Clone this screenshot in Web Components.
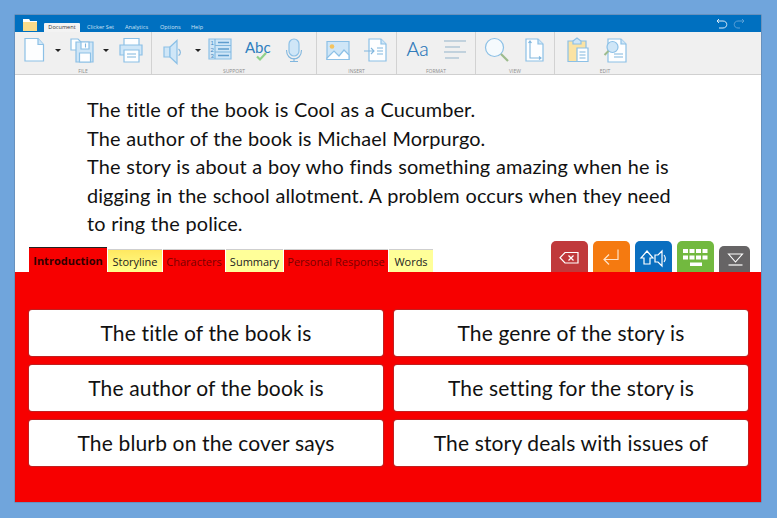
<!DOCTYPE html>
<html lang="en">
<head>
<meta charset="utf-8">
<title>Clicker document</title>
<style>
  html, body { margin: 0; height: 100%; background: #70a5dc; overflow: hidden; }
  body { font-family: "Lato", "Open Sans", sans-serif; }
</style>
</head>
<body>
<app-window>
  <title-bar slot="title"></title-bar>
  <rb-ribbon slot="ribbon">
    <rb-group label="FILE" width="137" pad="8">
      <rb-icon name="new"></rb-icon><rb-caret style="margin-left:8px"></rb-caret>
      <rb-icon name="save" style="margin-left:9px"></rb-icon><rb-caret style="margin-left:9px"></rb-caret>
      <rb-icon name="print" style="margin-left:10px"></rb-icon>
    </rb-group>
    <rb-group label="SUPPORT" width="165" pad="11">
      <rb-icon name="speaker"></rb-icon><rb-caret style="margin-left:8px"></rb-caret>
      <rb-icon name="list" style="margin-left:7px"></rb-icon>
      <rb-icon name="abc" style="margin-left:12px"></rb-icon>
      <rb-icon name="mic" style="margin-left:18px"></rb-icon>
    </rb-group>
    <rb-group label="INSERT" width="80" pad="9">
      <rb-icon name="image"></rb-icon><rb-icon name="import" style="margin-left:14px"></rb-icon>
    </rb-group>
    <rb-group label="FORMAT" width="79" pad="8">
      <rb-icon name="font"></rb-icon><rb-icon name="lines" style="margin-left:15px"></rb-icon>
    </rb-group>
    <rb-group label="VIEW" width="79" pad="10">
      <rb-icon name="zoom"></rb-icon><rb-icon name="page" style="margin-left:15px"></rb-icon>
    </rb-group>
    <rb-group label="EDIT" width="100" pad="12" last>
      <rb-icon name="paste"></rb-icon><rb-icon name="find" style="margin-left:12px"></rb-icon>
    </rb-group>
  </rb-ribbon>
  <doc-text slot="doc">
    <p>The title of the book is Cool as a Cucumber.</p>
    <p>The author of the book is Michael Morpurgo.</p>
    <p>The story is about a boy who finds something amazing when he is digging in the school allotment. A problem occurs when they need to ring the police.</p>
  </doc-text>
  <tab-row slot="tabs">
    <set-tab kind="active">Introduction</set-tab>
    <set-tab kind="gold" w="54">Storyline</set-tab>
    <set-tab kind="red" w="62">Characters</set-tab>
    <set-tab kind="yellow" w="57">Summary</set-tab>
    <set-tab kind="red" w="104">Personal Response</set-tab>
    <set-tab kind="yellow" w="44">Words</set-tab>
    <key-btn slot="keys" color="#c0393b" icon="back"></key-btn>
    <key-btn slot="keys" color="#f57a10" icon="enter"></key-btn>
    <key-btn slot="keys" color="#0a6fc0" icon="shift"></key-btn>
    <key-btn slot="keys" color="#72b93f" icon="keyboard"></key-btn>
    <key-btn slot="keys" color="#666465" icon="hide" small></key-btn>
  </tab-row>
  <phrase-grid slot="panel">
    <phrase-btn>The title of the book is</phrase-btn>
    <phrase-btn>The genre of the story is</phrase-btn>
    <phrase-btn>The author of the book is</phrase-btn>
    <phrase-btn>The setting for the story is</phrase-btn>
    <phrase-btn>The blurb on the cover says</phrase-btn>
    <phrase-btn>The story deals with issues of</phrase-btn>
  </phrase-grid>
</app-window>

<script>
// tiny helper so every element below reads the same
function shadow(el, html) {
  el.attachShadow({ mode: 'open' }).innerHTML = html;
}

const S = 'fill="#fdfeff" stroke="#8cc0e6" stroke-width="1.2"';
const L = 'fill="#cfe6f7" stroke="#8cc0e6" stroke-width="1.2"';
const D = 'fill="none" stroke="#80b6de" stroke-width="1.1"';

const ICONS = {
  new: `<path d="M2 .5h13l5.500 6V23H2z" ${S}/><path d="M15 .5v6h5.500" ${L}/>`,
  save: `<path d="M1 1h7l3 3v8H1z" ${S}/><path d="M6 4h17v20H6z" ${L}/><path d="M11 4h8v7h-8z" ${S}/><path d="M15.500 5.500v4" ${D}/><path d="M9.500 15h11v9h-11z" ${S}/>`,
  print: `<path d="M5 .5h15v7H5z" ${S}/><path d="M1 7h22v10H1z" ${L}/><path d="M5 12h15v12H5z" ${S}/><path d="M8 16h9M8 19h9" ${D}/>`,
  speaker: `<path d="M1 9h6v10H1z" ${L}/><path d="M7 9l7-6.500v23L7 19z" ${L}/><path d="M15.500 11c2.500 2 2.500 5 0 6.500" ${D}/>`,
  list: `<path d="M1 1h22v20H1z" ${L}/><path d="M7 1v20M7 7.500h16M7 14h16" ${D}/><path d="M10 4.500h11M10 11h11M10 17.500h11" stroke="#5f9dcd" stroke-width="1.300"/><text x="2.500" y="7" font-size="6" font-family="Liberation Sans" fill="#3f86bf">1</text><text x="2.500" y="13.500" font-size="6" font-family="Liberation Sans" fill="#3f86bf">2</text><text x="2.500" y="20" font-size="6" font-family="Liberation Sans" fill="#3f86bf">3</text>`,
  abc: `<text x="1" y="14.500" font-size="15" font-family="Lato" fill="#2f7fbf">Abc</text><path d="M13 18.500l3 3 6-6.500" fill="none" stroke="#8fd08a" stroke-width="2.200"/>`,
  mic: `<rect x="3" y="1" width="10" height="17" rx="5" ${L}/><path d="M.5 12c0 12 15 12 15 0M8 20v3.500M4 23.500h8" ${D}/>`,
  image: `<path d="M1 3.500h22v18H1z" ${L}/><circle cx="6" cy="8.500" r="2.300" fill="#f4c35e"/><path d="M1 20l7-7 5 5 5-6 5 5v4.500H1z" ${S}/>`,
  import: `<path d="M5 1h12l5 5v17H5z" ${S}/><path d="M17 1v5h5" ${L}/><path d="M0 13h10M7 10l3 3-3 3" ${D}/><path d="M13 10h6M13 13h6M13 16h6" ${D}/>`,
  font: `<text x="1.500" y="18" font-size="19.500" font-weight="300" font-family="Lato" fill="#1f74b8" stroke="#1f74b8" stroke-width=".15">Aa</text>`,
  lines: `<path d="M0 3h22M1 9h15M0 14h22M1 20h14" fill="none" stroke="#93b3ca" stroke-width="1"/>`,
  zoom: `<circle cx="8.500" cy="9.500" r="9" fill="#f5fafd" stroke="#8cc0e6" stroke-width="1.200"/><path d="M15 16l7 7" stroke="#9dbb8d" stroke-width="2.200"/>`,
  page: `<path d="M1 1h12l5 5v17H1z" ${S}/><path d="M13 1v5h5" ${L}/><path d="M5 3v17h11M3.500 5L5 3l1.500 2M14 18.500l2 1.500-2 1.500" ${D}/>`,
  paste: `<path d="M1 3h18v20.500H1z" fill="#fbe3a4" stroke="#8cc0e6" stroke-width="1.200"/><path d="M6 3l4-3 4 3v3H6z" ${L}/><path d="M10 10h11v13.500H10z" ${S}/><path d="M12.500 14h6M12.500 17h6M12.500 20h6" ${D}/>`,
  find: `<path d="M5 1h13l5 5v18H5z" ${S}/><path d="M18 1v5h5" ${L}/><path d="M11 16h9M11 19h9" ${D}/><circle cx="9.500" cy="9" r="5.500" ${L}/><path d="M5.500 13l-4 4" stroke="#9dbb8d" stroke-width="2"/>`
};

const KEY_ICONS = {
  back: `<path d="M9 4.500h13v10.500H9l-5-5.250z" fill="none" stroke="#fff" stroke-width="1.200"/><path d="M12.500 7.500l5 5M17.500 7.500l-5 5" stroke="#fff" stroke-width="1.200"/>`,
  enter: `<path d="M20 1.500v10H6M11 6.500l-5 5 5 5" fill="none" stroke="#ffe3c8" stroke-width="1.200"/>`,
  shift: `<path d="M7 3l6 7h-3v6H4v-6H1z" fill="none" stroke="#fff" stroke-width="1.200"/><path d="M15 7h3l4-4v15l-4-4h-3z" fill="none" stroke="#fff" stroke-width="1.200"/><path d="M24 7c1.500 2 1.500 5 0 7" fill="none" stroke="#fff" stroke-width="1.100"/>`,
  keyboard: `<g fill="#fff"><rect x="1" y="1" width="5" height="4"/><rect x="7.500" y="1" width="5" height="4"/><rect x="14" y="1" width="5" height="4"/><rect x="20.500" y="1" width="5" height="4"/><rect x="1" y="7.500" width="5" height="4"/><rect x="7.500" y="7.500" width="5" height="4"/><rect x="14" y="7.500" width="5" height="4"/><rect x="20.500" y="7.500" width="5" height="4"/><rect x="8" y="14.500" width="12" height="3.500"/></g>`,
  hide: `<path d="M4.500 3h14l-7 8z" fill="none" stroke="#fff" stroke-width="1.100"/><path d="M4.500 14h14" stroke="#fff" stroke-width="1.200"/>`
};

class AppWindow extends HTMLElement {
  connectedCallback() {
    shadow(this, `
      <style>
        :host { display: flex; flex-direction: column; box-sizing: border-box; width: 746px; height: 487px; margin: 15px; background: #fff; box-shadow: 0 0 0 .5px #5f7f9f; }
        .doc { flex: 1; min-height: 0; }
        .panel { height: 230px; background: #f70000; box-sizing: border-box; padding: 38px 13px 0 14px; }
      </style>
      <slot name="title"></slot>
      <slot name="ribbon"></slot>
      <div class="doc"><slot name="doc"></slot></div>
      <slot name="tabs"></slot>
      <div class="panel"><slot name="panel"></slot></div>
    `);
  }
}

class TitleBar extends HTMLElement {
  connectedCallback() {
    shadow(this, `
      <style>
        :host { display: flex; align-items: flex-end; height: 17px; background: #0070c0; font: 5.600px "Open Sans", sans-serif; color: #cfe3f5; }
        .folder { width: 14px; height: 13px; margin: 0 7px 1px 8px; align-self: flex-end; }
        .tab { padding: 0 0 1px; }
        .on { background: #f3f3f3; color: #333; width: 36px; height: 9px; box-sizing: border-box; text-align: center; border-radius: 1px 1px 0 0; margin-right: 7px; line-height: 9px; padding: 0; }
        .undo { margin-left: auto; margin-right: 16px; align-self: center; display: flex; gap: 5px; }
      </style>
      <svg class="folder" viewBox="0 0 14 13"><path d="M0 1h6l1 2h7v10H0z" fill="#fbdc8a"/><path d="M0 1h6l1 2h7v1H0z" fill="#fff"/></svg>
      <span class="tab on">Document</span>
      <span class="tab" style="width:38px">Clicker Set</span>
      <span class="tab" style="width:35px">Analytics</span>
      <span class="tab" style="width:31px">Options</span>
      <span class="tab">Help</span>
      <div class="undo">
        <svg width="12" height="11" viewBox="0 0 12 11"><path d="M3 1L1 3l2 2M1 3h6c5 0 5 7 0 7H3" fill="none" stroke="#dcebf7" stroke-width="1"/></svg>
        <svg width="12" height="11" viewBox="0 0 12 11"><path d="M9 1l2 2-2 2M11 3H5c-5 0-5 7 0 7h2" fill="none" stroke="#5b9fd6" stroke-width="1"/></svg>
      </div>
    `);
  }
}

class RbRibbon extends HTMLElement {
  connectedCallback() {
    shadow(this, `
      <style>
        :host { display: flex; height: 43px; background: #f0f0f0; border-bottom: 1px solid #d0d0d0; box-sizing: border-box; }
      </style>
      <slot></slot>
    `);
  }
}

class RbGroup extends HTMLElement {
  connectedCallback() {
    const w = this.getAttribute('width');
    const pad = this.getAttribute('pad');
    const line = this.hasAttribute('last') ? 'none' : '1px solid #d2d2d2';
    shadow(this, `
      <style>
        :host { display: flex; flex-direction: column; box-sizing: border-box; width: ${w}px; height: 42px; border-right: ${line}; padding: 6px 0 0 ${pad}px; }
        .items { display: flex; align-items: center; height: 24px; }
        .label { margin: 7px 0 0 -${pad}px; text-align: center; font: 5px "Open Sans", sans-serif; color: #8d8d8d; line-height: 5px; }
      </style>
      <div class="items"><slot></slot></div>
      <div class="label">${this.getAttribute('label')}</div>
    `);
  }
}

class RbIcon extends HTMLElement {
  connectedCallback() {
    shadow(this, `
      <style>:host { display: block; width: 24px; height: 24px; flex: none; } svg { display: block; overflow: visible; }</style>
      <svg width="24" height="24" viewBox="0 0 24 24">${ICONS[this.getAttribute('name')]}</svg>
    `);
  }
}

class RbCaret extends HTMLElement {
  connectedCallback() {
    shadow(this, `
      <style>:host { display: block; flex: none; width: 0; height: 0; border: 3px solid transparent; border-top: 3px solid #222; border-bottom: 0; }</style>
    `);
  }
}

class DocText extends HTMLElement {
  connectedCallback() {
    shadow(this, `
      <style>
        :host { display: block; box-sizing: border-box; padding: 20px 80px 0 72px; font: 19.900px/28.500px "Lato", "Open Sans", sans-serif; letter-spacing: .1px; word-spacing: .5px; color: #111; }
        ::slotted(p) { margin: 0; }
      </style>
      <slot></slot>
    `);
  }
}

class TabRow extends HTMLElement {
  connectedCallback() {
    shadow(this, `
      <style>
        :host { display: flex; align-items: flex-end; height: 31px; background: #fff; padding: 0 11px 0 14px; }
        .tabs { display: flex; gap: 1px; align-items: flex-end; }
        .keys { margin-left: auto; display: flex; gap: 5px; align-items: flex-end; }
      </style>
      <div class="tabs"><slot></slot></div>
      <div class="keys"><slot name="keys"></slot></div>
    `);
  }
}

class SetTab extends HTMLElement {
  connectedCallback() {
    const w = this.getAttribute('w') || 78;
    shadow(this, `
      <style>
        :host { display: block; box-sizing: border-box; width: ${w}px; height: 23px; border-top: 1px solid #cfcfcf; text-align: center; font: 11px/24px "Open Sans", sans-serif; white-space: nowrap; }
        :host([kind=yellow]) { background: #ffff99; color: #222; }
        :host([kind=gold]) { background: linear-gradient(#ffe860, #ffff8c); color: #222; }
        :host([kind=red]) { background: #f70000; color: #7a0000; }
        :host([kind=active]) { background: #f70000; color: #300000; height: 25px; border-top: 1px solid #222; font-weight: 700; line-height: 25px; }
      </style>
      <slot></slot>
    `);
  }
}

class KeyBtn extends HTMLElement {
  connectedCallback() {
    const small = this.hasAttribute('small');
    const w = small ? 31 : 37;
    const h = small ? 26 : 31;
    const icon = KEY_ICONS[this.getAttribute('icon')];
    shadow(this, `
      <style>
        :host { display: flex; justify-content: center; align-items: center; box-sizing: border-box; width: ${w}px; height: ${h}px; background: ${this.getAttribute('color')}; border-radius: 5px 5px 0 0; }
        svg { display: block; overflow: visible; }
      </style>
      <svg width="${small ? 22 : 27}" height="${small ? 16 : 18}" viewBox="0 0 ${small ? 22 : 27} ${small ? 16 : 18}">${icon}</svg>
    `);
  }
}

class PhraseGrid extends HTMLElement {
  connectedCallback() {
    shadow(this, `
      <style>:host { display: grid; grid-template-columns: 354px 354px; column-gap: 11px; grid-auto-rows: 46px; row-gap: 9px; }</style>
      <slot></slot>
    `);
  }
}

class PhraseBtn extends HTMLElement {
  connectedCallback() {
    shadow(this, `
      <style>
        :host { display: flex; align-items: center; justify-content: center; box-sizing: border-box; padding-bottom: 2px; background: #fff; border-radius: 3px; box-shadow: 0 0 0 1px #c02020; font: 21px "Lato", "Open Sans", sans-serif; letter-spacing: .15px; color: #111; white-space: nowrap; }
      </style>
      <slot></slot>
    `);
  }
}

customElements.define('app-window', AppWindow);
customElements.define('title-bar', TitleBar);
customElements.define('rb-ribbon', RbRibbon);
customElements.define('rb-group', RbGroup);
customElements.define('rb-icon', RbIcon);
customElements.define('rb-caret', RbCaret);
customElements.define('doc-text', DocText);
customElements.define('tab-row', TabRow);
customElements.define('set-tab', SetTab);
customElements.define('key-btn', KeyBtn);
customElements.define('phrase-grid', PhraseGrid);
customElements.define('phrase-btn', PhraseBtn);
</script>
</body>
</html>
